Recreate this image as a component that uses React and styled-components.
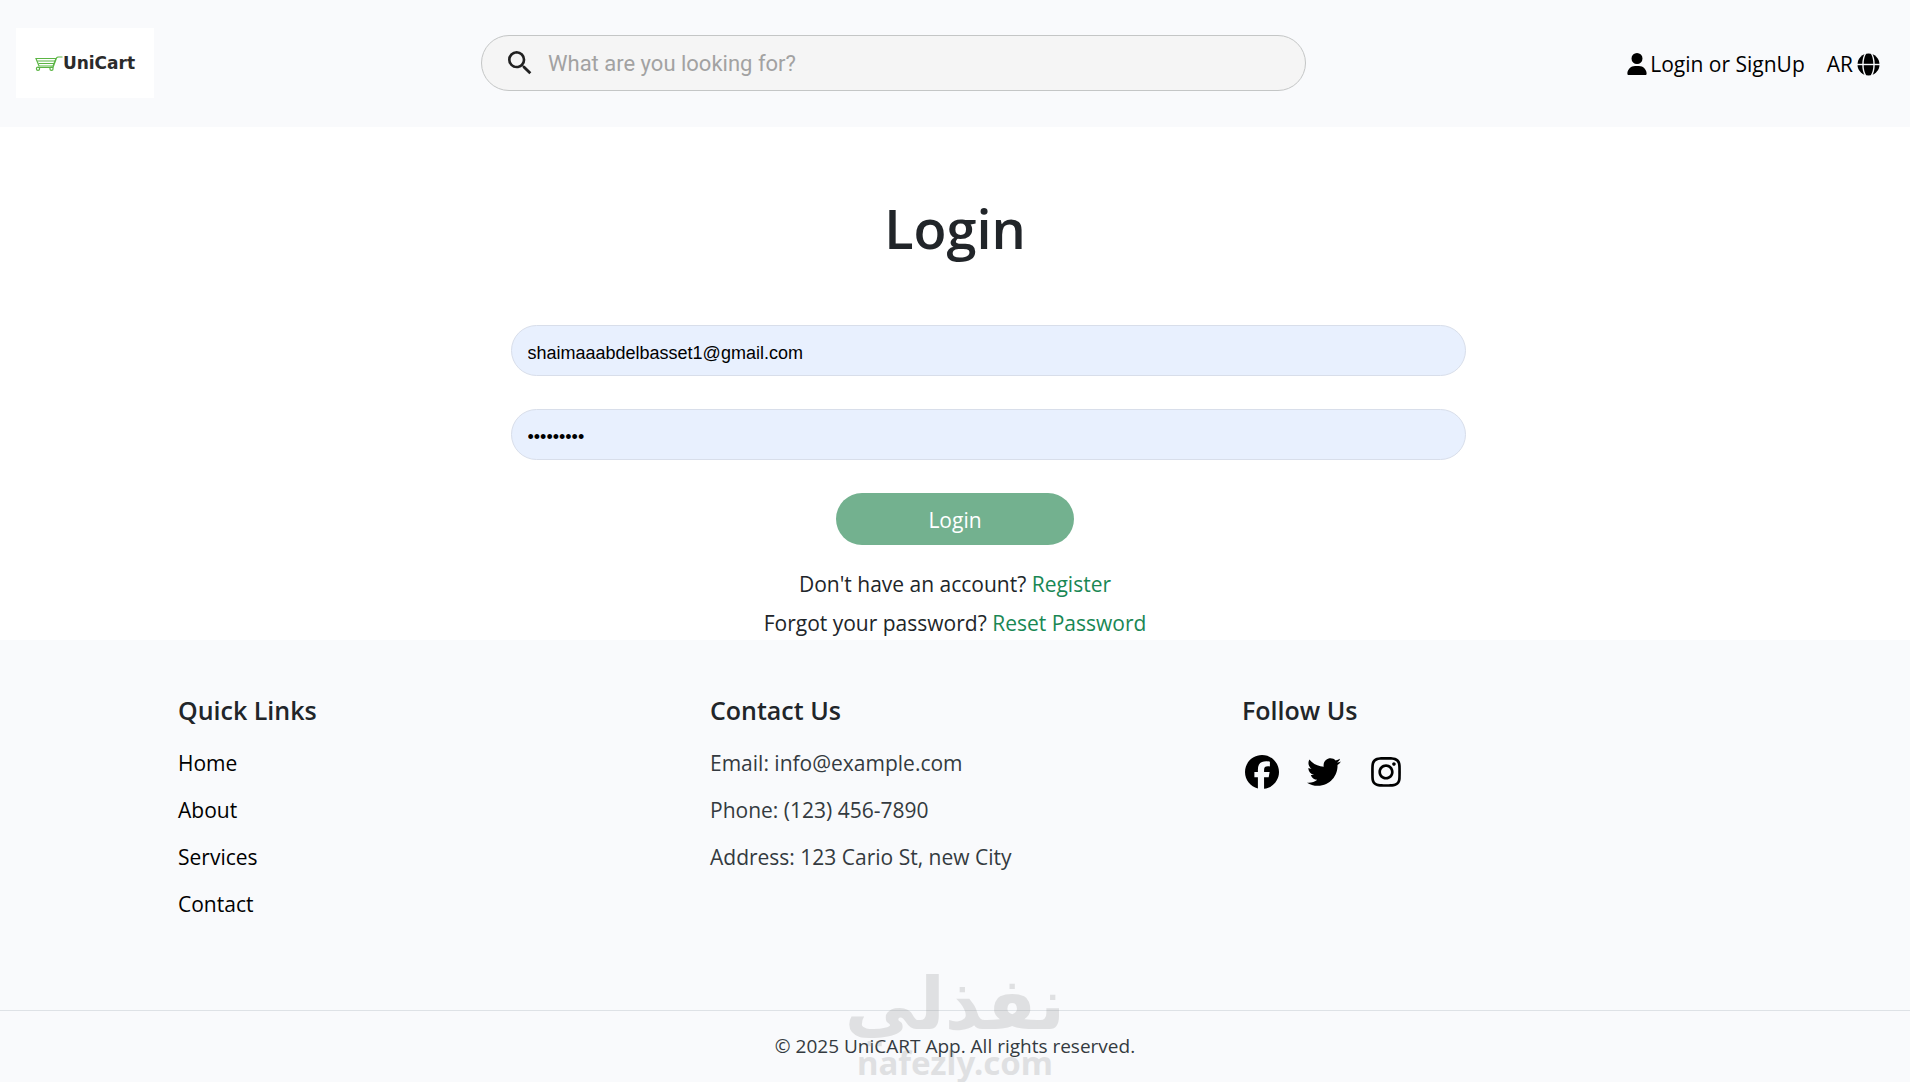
import React from 'react';
import styled, { createGlobalStyle } from 'styled-components';
import { FaFacebook, FaInstagram, FaTwitter, FaUser } from 'react-icons/fa6';
import { MdSearch } from 'react-icons/md';

const GlobalStyle = createGlobalStyle`
    *, *::before, *::after {
        box-sizing: border-box;
    }
    body {
        margin: 0;
        background-color: #fff;
        color: #212529;
        font-family: 'Open Sans', 'Noto Sans', sans-serif;
        font-size: 21px;
        line-height: 33px;
    }
    h1, h2, p, ul {
        margin: 0;
        padding: 0;
    }
    a {
        text-decoration: none;
    }
`;

const Header = styled.header`
    display: grid;
    grid-template-columns: 465px minmax(300px, 825px) 1fr;
    align-items: center;
    padding: 28px 30px 29px 16px;
    background-color: #f9fafc;
`;

const LogoLink = styled.a`
    display: flex;
    align-items: center;
    justify-content: center;
    width: 138px;
    height: 70px;
    background-color: #fff;
    color: #2b2b2b;
    font-family: 'DejaVu Sans', sans-serif;
    font-size: 17px;
    font-weight: 700;
    line-height: 20px;
`;

const SearchBox = styled.label`
    display: flex;
    align-items: center;
    gap: 12px;
    height: 56px;
    padding: 0 22px;
    border: 1px solid #c4c6c6;
    border-radius: 28px;
    background-color: #f5f5f5;
    color: #212121;
    svg {
        flex: none;
    }
`;

const SearchInput = styled.input`
    flex: 1;
    min-width: 0;
    padding: 0;
    border: none;
    outline: none;
    background: transparent;
    color: #212121;
    font-family: Roboto, sans-serif;
    font-size: 22px;
    &::placeholder {
        color: #a2a2a2;
        opacity: 1;
    }
`;

const HeaderNav = styled.nav`
    display: flex;
    justify-content: flex-end;
    gap: 22px;
    padding-top: 2px;
`;

const NavLink = styled.a`
    display: flex;
    align-items: center;
    gap: 2px;
    color: #000;
    white-space: nowrap;
`;

const LangButton = styled.button`
    display: flex;
    align-items: center;
    gap: 4px;
    padding: 0;
    border: none;
    background: none;
    color: #000;
    font: inherit;
    cursor: pointer;
`;

const Main = styled.main`
    display: flex;
    flex-direction: column;
    align-items: center;
    padding-top: 68px;
`;

const Title = styled.h1`
    font-size: 54px;
    font-weight: 600;
    line-height: 66px;
`;

const Form = styled.form`
    display: flex;
    flex-direction: column;
    align-items: center;
    gap: 33px;
    width: 100%;
    margin-top: 64px;
`;

const Field = styled.input`
    width: 50%;
    height: 51px;
    margin-left: 66px;
    padding: 5px 16px 0;
    border: 1px solid #d8deea;
    border-radius: 26px;
    outline: none;
    background-color: #e8f0fe;
    color: #000;
    font-family: 'Liberation Sans', Arial, sans-serif;
    font-size: 18px;
`;

const SubmitButton = styled.button`
    width: 238px;
    height: 52px;
    padding: 2px 0 0;
    border: none;
    border-radius: 26px;
    background-color: #73b18f;
    color: #fff;
    font: inherit;
    cursor: pointer;
`;

const Hints = styled.div`
    display: flex;
    flex-direction: column;
    gap: 6px;
    margin-top: 23px;
    text-align: center;
    a {
        color: #198754;
    }
`;

const Footer = styled.footer`
    position: relative;
    background-color: #f9fafc;
`;

const FooterColumns = styled.div`
    display: grid;
    grid-template-columns: repeat(3, 1fr);
    max-width: 1596px;
    min-height: 370px;
    margin: 0 auto;
    padding-top: 54px;
`;

const Column = styled.section`
    padding: 0 21px;
`;

const ColumnTitle = styled.h2`
    margin-bottom: 20px;
    font-size: 25px;
    font-weight: 600;
    line-height: 33px;
`;

const List = styled.ul`
    display: flex;
    flex-direction: column;
    gap: 14px;
    color: #343a40;
    list-style: none;
    a {
        color: #000;
    }
`;

const Socials = styled.div`
    display: flex;
    gap: 28px;
    padding: 8px 3px;
    a {
        display: flex;
        color: #000;
    }
`;

const Copyright = styled.p`
    padding: 19px 0;
    border-top: 1px solid #dee2e6;
    color: #343a40;
    font-size: 19px;
    text-align: center;
`;

const Watermark = styled.div`
    position: absolute;
    right: 0;
    bottom: 0;
    left: 0;
    display: flex;
    flex-direction: column;
    align-items: center;
    color: #969696;
    font-family: 'DejaVu Sans', sans-serif;
    font-weight: 700;
    opacity: 0.25;
    pointer-events: none;
`;

const WatermarkArabic = styled.span`
    font-size: 72px;
    line-height: 80px;
`;

const WatermarkLatin = styled.span`
    font-family: 'Noto Sans', sans-serif;
    font-size: 33px;
    line-height: 38px;
`;

const CartIcon = () => (
    <svg width='28' height='15' viewBox='0 0 28 15' fill='none' stroke='#5bb544' strokeWidth='1.2' aria-hidden='true'>
        <path d='M1 2.5H21L18 10H4L1 2.5ZM27.5 1H23.5Q22 1 21.5 2L18 11.5H3' />
        <path d='M2.5 5H20M3.5 7.5H19' />
        <circle cx='3' cy='12.8' r='1.6' />
        <circle cx='16.5' cy='12.8' r='1.6' />
    </svg>
);

const GlobeIcon = () => (
    <svg width='23' height='23' viewBox='0 0 23 23' aria-hidden='true'>
        <circle cx='11.5' cy='11.5' r='11' fill='#000' />
        <g fill='none' stroke='#f9fafc' strokeWidth='1.4'>
            <path d='M0 11.5H23' />
            <path d='M8.8 0C5 6 5 17 8.8 23M14.2 0C18 6 18 17 14.2 23' />
        </g>
    </svg>
);

const quickLinks = ['Home', 'About', 'Services', 'Contact'];
const contacts = ['Email: info@example.com', 'Phone: (123) 456-7890', 'Address: 123 Cario St, new City'];
const socials = [
    { name: 'Facebook', Icon: FaFacebook },
    { name: 'Twitter', Icon: FaTwitter },
    { name: 'Instagram', Icon: FaInstagram },
];

const App = () => {
    const [email, setEmail] = React.useState('shaimaaabdelbasset1@gmail.com');
    const [password, setPassword] = React.useState('unicart25');

    const handleSubmit = (e) => {
        e.preventDefault();
    };

    return (
        <>
            <GlobalStyle />
            <Header>
                <LogoLink href='#home'>
                    <CartIcon />
                    UniCart
                </LogoLink>
                <SearchBox>
                    <MdSearch size={32} />
                    <SearchInput type='text' placeholder='What are you looking for?' aria-label='Search' />
                </SearchBox>
                <HeaderNav>
                    <NavLink href='#login'>
                        <FaUser size={22} />
                        Login or SignUp
                    </NavLink>
                    <LangButton type='button'>
                        AR
                        <GlobeIcon />
                    </LangButton>
                </HeaderNav>
            </Header>
            <Main>
                <Title>Login</Title>
                <Form onSubmit={handleSubmit}>
                    <Field
                        type='email'
                        aria-label='Email'
                        value={email}
                        onChange={(e) => setEmail(e.target.value)}
                    />
                    <Field
                        type='password'
                        aria-label='Password'
                        value={password}
                        onChange={(e) => setPassword(e.target.value)}
                    />
                    <SubmitButton type='submit'>Login</SubmitButton>
                </Form>
                <Hints>
                    <p>
                        Don't have an account? <a href='#register'>Register</a>
                    </p>
                    <p>
                        Forgot your password? <a href='#reset'>Reset Password</a>
                    </p>
                </Hints>
            </Main>
            <Footer>
                <FooterColumns>
                    <Column>
                        <ColumnTitle>Quick Links</ColumnTitle>
                        <List>
                            {quickLinks.map((item) => (
                                <li key={item}>
                                    <a href={`#${item.toLowerCase()}`}>{item}</a>
                                </li>
                            ))}
                        </List>
                    </Column>
                    <Column>
                        <ColumnTitle>Contact Us</ColumnTitle>
                        <List>
                            {contacts.map((item) => (
                                <li key={item}>{item}</li>
                            ))}
                        </List>
                    </Column>
                    <Column>
                        <ColumnTitle>Follow Us</ColumnTitle>
                        <Socials>
                            {socials.map(({ name, Icon }) => (
                                <a key={name} href={`#${name.toLowerCase()}`} aria-label={name}>
                                    <Icon size={34} />
                                </a>
                            ))}
                        </Socials>
                    </Column>
                </FooterColumns>
                <Copyright>© 2025 UniCART App. All rights reserved.</Copyright>
                <Watermark aria-hidden='true'>
                    <WatermarkArabic lang='ar'>نفذلي</WatermarkArabic>
                    <WatermarkLatin>nafezly.com</WatermarkLatin>
                </Watermark>
            </Footer>
        </>
    );
};

export default App;
